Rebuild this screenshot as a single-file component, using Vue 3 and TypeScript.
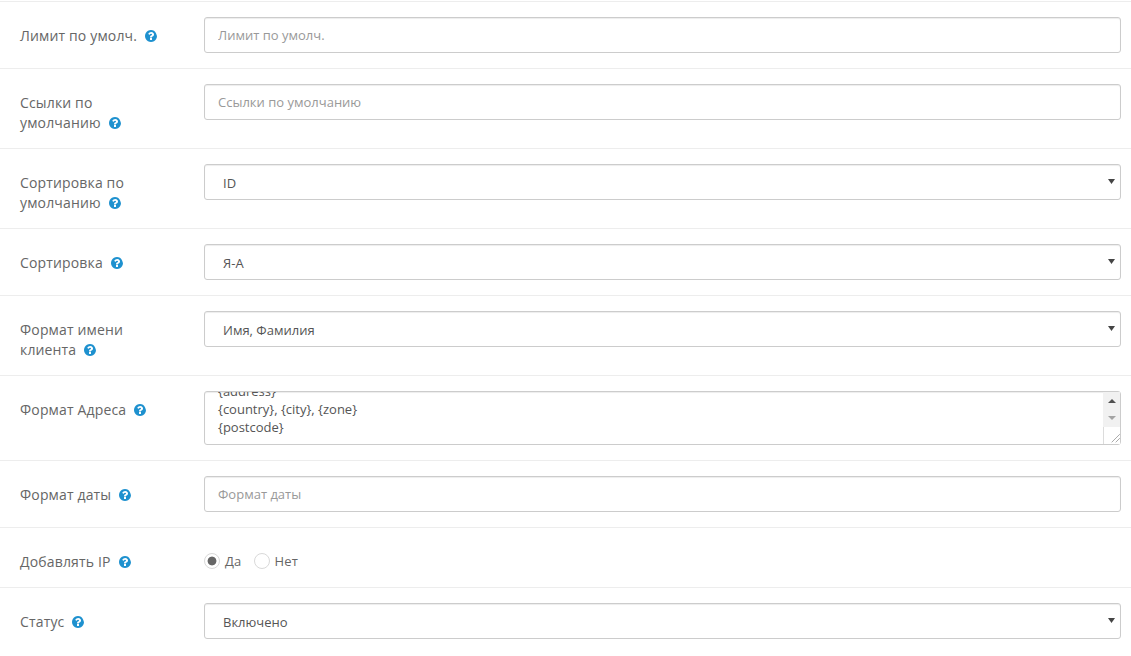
<script setup lang="ts">
import { onMounted, ref } from 'vue'

const helpPath = 'M1024 1376v-192q0-14-9-23t-23-9h-192q-14 0-23 9t-9 23v192q0 14 9 23t23 9h192q14 0 23-9t9-23zm256-672q0-88-55.5-163t-138.5-116-170-41q-243 0-371 213-15 24 8 42l132 100q7 6 19 6 16 0 25-12 53-68 86-92 34-24 86-24 48 0 85.5 26t37.5 59q0 38-20 61t-68 45q-63 28-115.5 86.5t-52.5 125.5v36q0 14 9 23t23 9h192q14 0 23-9t9-23q0-19 21.5-49.5t54.5-49.5q32-18 49-28.5t46-35 44.5-48 28-60.5 12.5-81zm384 192q0 209-103 385.5t-279.5 279.5-385.5 103-385.5-103-279.5-279.5-103-385.5 103-385.5 279.5-279.5 385.5-103 385.5 103 279.5 385.5 103 385.5z'

interface Row {
  label: string
  kind: 'input' | 'select' | 'textarea' | 'radio'
  value?: string
}

const rows: Row[] = [
  { label: 'Лимит по умолч.', kind: 'input' },
  { label: 'Ссылки по умолчанию', kind: 'input' },
  { label: 'Сортировка по умолчанию', kind: 'select', value: 'ID' },
  { label: 'Сортировка', kind: 'select', value: 'Я-А' },
  { label: 'Формат имени клиента', kind: 'select', value: 'Имя, Фамилия' },
  { label: 'Формат Адреса', kind: 'textarea' },
  { label: 'Формат даты', kind: 'input' },
  { label: 'Добавлять IP', kind: 'radio' },
  { label: 'Статус', kind: 'select', value: 'Включено' },
]

const placeholders: Record<string, string> = {
  'Лимит по умолч.': 'Лимит по умолч.',
  'Ссылки по умолчанию': 'Ссылки по умолчанию',
  'Формат даты': 'Формат даты',
}

const address = '{firstname} {lastname}\n{company}\n{address}\n{country}, {city}, {zone}\n{postcode}'
const area = ref<HTMLTextAreaElement[] | null>(null)

onMounted(() => {
  const el = area.value?.[0]
  if (el) el.scrollTop = el.scrollHeight
})
</script>

<template>
  <form class="page">
    <div v-for="row in rows" :key="row.label" class="row">
      <label class="label">
        <span>{{ row.label }}</span>
        <svg class="help" viewBox="0 0 1792 1792" aria-hidden="true"><path :d="helpPath" /></svg>
      </label>
      <div class="field">
        <input v-if="row.kind === 'input'" class="control" type="text" :placeholder="placeholders[row.label]" />
        <div v-else-if="row.kind === 'select'" class="select-wrap">
          <select class="control select">
            <option>{{ row.value }}</option>
          </select>
          <svg class="caret" viewBox="0 0 7 5" aria-hidden="true"><path d="M0 0h7L3.5 5z" /></svg>
        </div>
        <div v-else-if="row.kind === 'textarea'" class="area-wrap">
          <textarea ref="area" class="control area" :value="address" rows="3"></textarea>
          <div class="scrollbar">
            <div class="track">
              <svg class="arrow" viewBox="0 0 8 4"><path d="M4 0l4 4H0z" fill="#505050" /></svg>
              <svg class="arrow" viewBox="0 0 8 4"><path d="M0 0h8L4 4z" fill="#a3a3a3" /></svg>
            </div>
            <div class="grip">
              <svg viewBox="0 0 16 16" width="16" height="16"><path d="M15.5 7.5l-8 8M15.5 11.5l-4 4" stroke="#777" fill="none" stroke-dasharray="1 0.4" /></svg>
            </div>
          </div>
        </div>
        <div v-else class="radios">
          <label class="radio"><input type="radio" name="ip" class="dot" checked />Да</label>
          <label class="radio"><input type="radio" name="ip" class="dot" />Нет</label>
        </div>
      </div>
    </div>
  </form>
</template>

<style>
html, body { margin: 0; background: #fff; overflow: hidden; }
</style>

<style scoped>
.page {
  padding: 1px 0 0;
  font-family: "Open Sans", "Noto Sans", sans-serif;
  font-size: 13px;
  color: #666;
}
.row {
  display: grid;
  grid-template-columns: 204px 917px;
  padding: 15px 0;
  border-top: 1px solid #ededed;
}
.label {
  display: block;
  box-sizing: border-box;
  padding: 9px 44px 0 20px;
  font-size: 14px;
  letter-spacing: 0.15px;
  line-height: 20px;
  color: #666;
}
.help {
  width: 14px;
  height: 14px;
  margin-left: 7px;
  vertical-align: -2px;
  fill: #1e91cf;
}
.field { min-width: 0; }
.control {
  display: block;
  box-sizing: border-box;
  width: 100%;
  height: 36px;
  padding: 8px 13px;
  border: 1px solid #ccc;
  border-radius: 3px;
  background: #fff;
  font: 13px/18px "Open Sans", "Noto Sans", sans-serif;
  color: #555;
  box-shadow: inset 0 1px 1px rgba(0, 0, 0, 0.075);
  outline: none;
}
.control::placeholder { color: #999; opacity: 1; }
.select-wrap, .area-wrap { position: relative; }
.select {
  appearance: none;
  padding: 9px 13px 7px 18px;
}
.caret {
  position: absolute;
  right: 6px;
  top: 15px;
  width: 7px;
  height: 5px;
  fill: #444;
  pointer-events: none;
}
.area {
  height: 54px;
  padding: 8px 13px;
  overflow: hidden;
  resize: none;
}
.scrollbar {
  position: absolute;
  top: 1px;
  right: 1px;
  bottom: 1px;
  width: 17px;
  display: flex;
  flex-direction: column;
}
.track {
  flex: 1;
  background: #f1f1f1;
  display: flex;
  flex-direction: column;
  align-items: center;
  gap: 13px;
  padding-top: 7px;
  box-sizing: border-box;
}
.arrow { width: 8px; height: 4px; display: block; }
.grip {
  box-sizing: border-box;
  height: 17px;
  border-left: 1px solid #dcdcdc;
  background: #fff;
  line-height: 0;
}
.radios {
  display: flex;
  align-items: center;
  gap: 12px;
  padding-top: 9px;
}
.radio {
  display: flex;
  align-items: center;
  gap: 5px;
  font-size: 13px;
  letter-spacing: 0.2px;
  line-height: 18px;
  color: #666;
}
.dot {
  appearance: none;
  box-sizing: border-box;
  width: 16px;
  height: 16px;
  margin: 0;
  border: 1px solid #d9d9d9;
  border-radius: 50%;
  background: #fff;
}
.dot:checked {
  background: radial-gradient(circle, #666 0 4px, #fff 4.8px);
}
</style>
